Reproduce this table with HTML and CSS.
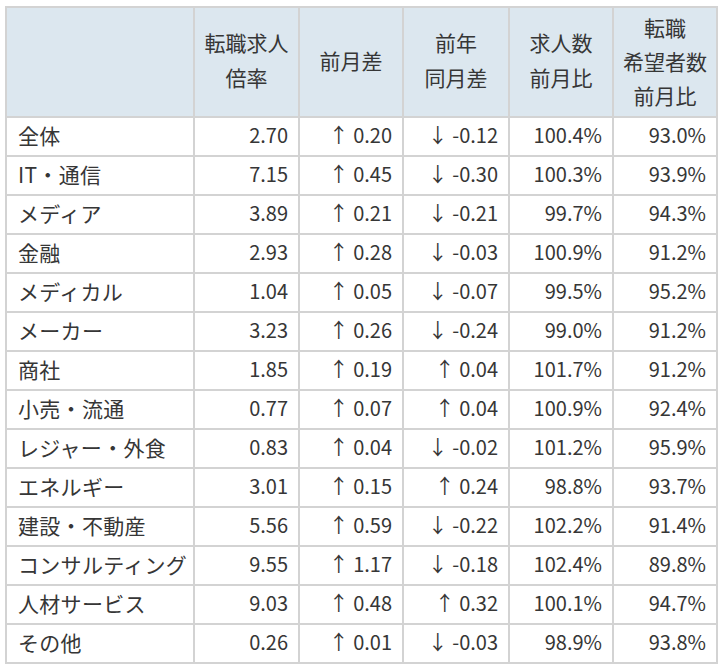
FILE: index.html
```html
<!DOCTYPE html>
<html lang="ja">
<head>
<meta charset="utf-8">
<link rel="stylesheet" href="styles.css">
</head>
<body>
<table class="stats">
<colgroup>
<col class="c-name"><col class="c1"><col class="c2"><col class="c3"><col class="c4"><col class="c5">
</colgroup>
<thead>
<tr>
<th></th>
<th>転職求人<br>倍率</th>
<th>前月差</th>
<th>前年<br>同月差</th>
<th>求人数<br>前月比</th>
<th class="three">転職<br>希望者数<br>前月比</th>
</tr>
</thead>
<tbody>
<tr><td class="name">全体</td><td>2.70</td><td>↑ 0.20</td><td>↓ -0.12</td><td>100.4%</td><td>93.0%</td></tr>
<tr><td class="name">IT・通信</td><td>7.15</td><td>↑ 0.45</td><td>↓ -0.30</td><td>100.3%</td><td>93.9%</td></tr>
<tr><td class="name">メディア</td><td>3.89</td><td>↑ 0.21</td><td>↓ -0.21</td><td>99.7%</td><td>94.3%</td></tr>
<tr><td class="name">金融</td><td>2.93</td><td>↑ 0.28</td><td>↓ -0.03</td><td>100.9%</td><td>91.2%</td></tr>
<tr><td class="name">メディカル</td><td>1.04</td><td>↑ 0.05</td><td>↓ -0.07</td><td>99.5%</td><td>95.2%</td></tr>
<tr><td class="name">メーカー</td><td>3.23</td><td>↑ 0.26</td><td>↓ -0.24</td><td>99.0%</td><td>91.2%</td></tr>
<tr><td class="name">商社</td><td>1.85</td><td>↑ 0.19</td><td>↑ 0.04</td><td>101.7%</td><td>91.2%</td></tr>
<tr><td class="name">小売・流通</td><td>0.77</td><td>↑ 0.07</td><td>↑ 0.04</td><td>100.9%</td><td>92.4%</td></tr>
<tr><td class="name">レジャー・外食</td><td>0.83</td><td>↑ 0.04</td><td>↓ -0.02</td><td>101.2%</td><td>95.9%</td></tr>
<tr><td class="name">エネルギー</td><td>3.01</td><td>↑ 0.15</td><td>↑ 0.24</td><td>98.8%</td><td>93.7%</td></tr>
<tr><td class="name">建設・不動産</td><td>5.56</td><td>↑ 0.59</td><td>↓ -0.22</td><td>102.2%</td><td>91.4%</td></tr>
<tr><td class="name">コンサルティング</td><td>9.55</td><td>↑ 1.17</td><td>↓ -0.18</td><td>102.4%</td><td>89.8%</td></tr>
<tr><td class="name">人材サービス</td><td>9.03</td><td>↑ 0.48</td><td>↑ 0.32</td><td>100.1%</td><td>94.7%</td></tr>
<tr><td class="name">その他</td><td>0.26</td><td>↑ 0.01</td><td>↓ -0.03</td><td>98.9%</td><td>93.8%</td></tr>
</tbody>
</table>
</body>
</html>
```
FILE: styles.css
```css
html, body {
  margin: 0;
  padding: 0;
  background: #ffffff;
}
body {
  padding: 6px 0 0 5px;
  font-family: "Noto Sans CJK JP", "Noto Sans", sans-serif;
  color: #363636;
}
.stats {
  border-collapse: collapse;
  table-layout: fixed;
  width: 711px;
  font-size: 20px;
}
.c-name { width: 188px; }
.c1 { width: 105px; }
.c2 { width: 104px; }
.c3 { width: 106px; }
.c4 { width: 104px; }
.c5 { width: 104px; }
.stats th,
.stats td {
  border: 2px solid #d3d3d3;
}
.stats thead tr {
  height: 110px;
}
.stats th {
  background: #dce7ef;
  font-weight: normal;
  font-size: 21px;
  text-align: center;
  line-height: 35px;
  padding: 0 0 4px 0;
}
.stats th.three {
  line-height: 34px;
  padding: 0 0 2px 0;
}
.stats tbody tr {
  height: 39px;
}
.stats td {
  text-align: right;
  padding: 0 10px 3px 10px;
  line-height: 24px;
  white-space: nowrap;
}
.stats td.name {
  text-align: left;
  padding-left: 11px;
  font-size: 21px;
  letter-spacing: 0.3px;
}
```
